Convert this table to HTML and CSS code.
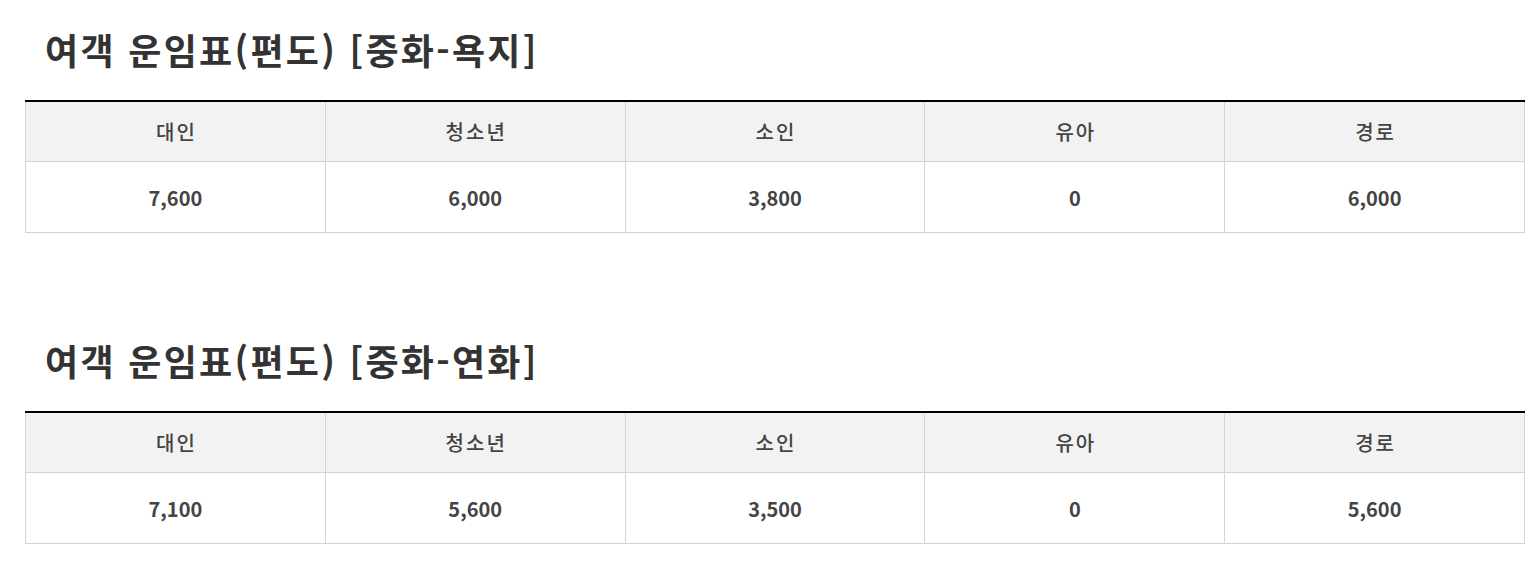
FILE: index.html
```html
<!DOCTYPE html>
<html lang="ko">
<head>
<meta charset="utf-8">
<link rel="stylesheet" href="styles.css">
</head>
<body>
<div class="page">
  <section class="fare">
    <h2 class="fare-title">여객 운임표(편도) [중화-욕지]</h2>
    <table class="fare-table">
      <thead>
        <tr><th>대인</th><th>청소년</th><th>소인</th><th>유아</th><th>경로</th></tr>
      </thead>
      <tbody>
        <tr><td>7,600</td><td>6,000</td><td>3,800</td><td>0</td><td>6,000</td></tr>
      </tbody>
    </table>
  </section>
  <section class="fare">
    <h2 class="fare-title">여객 운임표(편도) [중화-연화]</h2>
    <table class="fare-table">
      <thead>
        <tr><th>대인</th><th>청소년</th><th>소인</th><th>유아</th><th>경로</th></tr>
      </thead>
      <tbody>
        <tr><td>7,100</td><td>5,600</td><td>3,500</td><td>0</td><td>5,600</td></tr>
      </tbody>
    </table>
  </section>
</div>
</body>
</html>
```
FILE: styles.css
```css
html, body {
  margin: 0;
  padding: 0;
  background: #fff;
}
body {
  font-family: "Noto Sans CJK KR", "Noto Sans", sans-serif;
  color: #333;
}
.page {
  width: 1500px;
  margin-left: 25px;
  padding-top: 16px;
}
.fare + .fare {
  margin-top: 94px;
}
.fare-title {
  margin: 0 0 18px 0;
  padding-left: 20px;
  font-size: 36px;
  line-height: 66px;
  letter-spacing: 2.3px;
  font-weight: 700;
  color: #333;
}
.fare-table {
  width: 1500px;
  border-collapse: collapse;
  table-layout: fixed;
  border-top: 2px solid #000;
}
.fare-table th {
  height: 59px;
  padding: 0 0 0 2px;
  background: #f2f2f2;
  border: 1px solid #d4d4d4;
  border-top: none;
  font-size: 20px;
  letter-spacing: 2px;
  font-weight: 500;
  color: #444;
}
.fare-table td {
  height: 70px;
  padding: 0;
  border: 1px solid #d4d4d4;
  text-align: center;
  font-size: 20px;
  font-weight: 700;
  color: #444;
}
```
